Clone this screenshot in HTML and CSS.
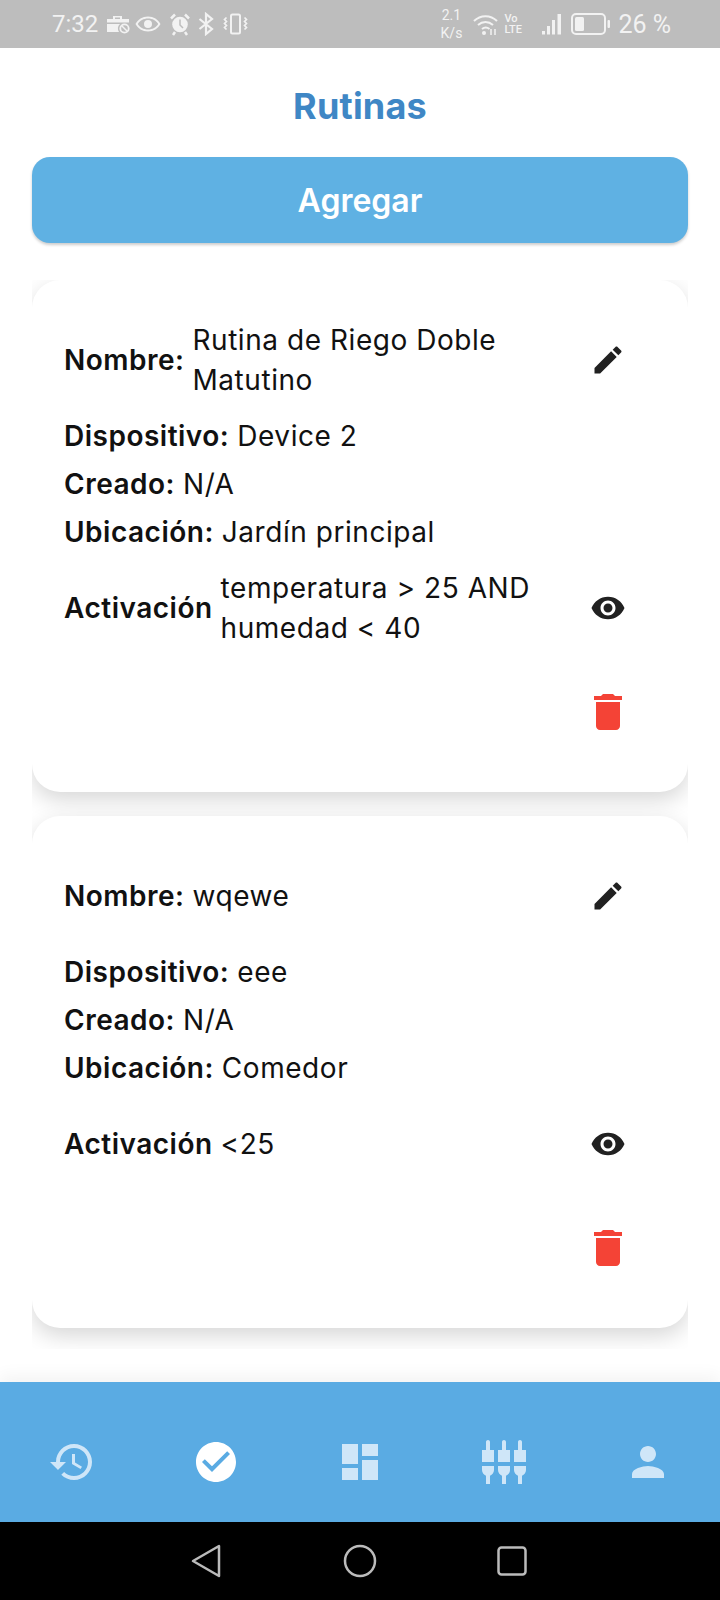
FILE: index.html
```html
<!DOCTYPE html>
<html lang="es">
<head>
  <meta charset="UTF-8" />
  <title>Rutinas</title>
  <link rel="stylesheet" href="styles.css">
</head>
<body>
  <div class="status-bar">
    <span class="time">7:32</span>
    <svg class="st-work" width="24" height="24" viewBox="0 0 24 24"><path d="M1 7h6V4h9v3h7v3.500H1zM9 5.500V7h5V5.500z" fill="#f2f2f2" fill-rule="evenodd"/><path d="M1 12h13a6.500 6.500 0 0 0-1 8H1z" fill="#f2f2f2"/><circle cx="18.500" cy="16.500" r="4.200" fill="none" stroke="#f2f2f2" stroke-width="1.800"/><path d="M15.500 13.500l6 6" stroke="#f2f2f2" stroke-width="1.500"/></svg>
    <svg class="st-eye" width="26" height="24" viewBox="0 0 26 24"><path fill="#f2f2f2" fill-rule="evenodd" d="M13 4.500C7.500 4.500 2.800 7.500 0.500 12c2.300 4.500 7 7.500 12.500 7.500s10.200-3 12.500-7.500C23.200 7.500 18.500 4.500 13 4.500zm0 2c4.500 0 8.200 2.200 10.200 5.500-2 3.300-5.700 5.500-10.200 5.500S4.800 15.300 2.800 12C4.800 8.700 8.500 6.500 13 6.500zm0 1.500a4 4 0 1 0 0 8 4 4 0 0 0 0-8z"/></svg>
    <svg class="st-alarm" width="20" height="24" viewBox="0 0 20 24"><circle cx="10" cy="12.500" r="7.800" fill="#f2f2f2"/><path d="M10 7.500v5.500l3 3" stroke="#bdbdbd" stroke-width="1.500" fill="none"/><path d="M1 6.500l4-4M19 6.500l-4-4M5 20l-2 3M15 20l2 3" stroke="#f2f2f2" stroke-width="2.500"/></svg>
    <svg class="st-bt" width="16" height="24" viewBox="0 0 16 24"><path d="M1.500 7l12.500 10-6 5V2l6 5L1.500 17" fill="none" stroke="#f2f2f2" stroke-width="2.200"/></svg>
    <svg width="25" height="24" viewBox="0 0 25 24"><rect x="8" y="2.500" width="9" height="19" rx="1.500" fill="none" stroke="#f2f2f2" stroke-width="2"/><path d="M3.500 5.500l-2 2 2 2-2 2 2 2-2 2 2 2M21.500 5.500l2 2-2 2 2 2-2 2 2 2-2 2" fill="none" stroke="#f2f2f2" stroke-width="1.700"/></svg>
    <span class="spacer"></span>
    <span class="speed">2.1<br>K/s</span>
    <svg class="st-wifi" width="25" height="24" viewBox="0 0 25 24"><path d="M1 9c6.500-6.500 16.500-6.500 23 0M5 13c4.500-4 10.500-4 15 0M9 17c2.500-2 5-2 7.500 0" fill="none" stroke="#f2f2f2" stroke-width="2"/><circle cx="11" cy="21" r="2" fill="#f2f2f2"/><path d="M18 17v6M22 17v6" stroke="#f2f2f2" stroke-width="1.500"/></svg>
    <span class="volte">Vo<br>LTE</span>
    <svg class="st-signal" width="21" height="24" viewBox="0 0 21 24"><path d="M1 19h3v3.500H1zM6 14h3v8.500H6zM11 8h3v14.500h-3zM16.500 2h3.500v20.500h-3.500z" fill="#f2f2f2"/></svg>
    <svg class="st-battery" width="39" height="24" viewBox="0 0 39 24"><rect x="1" y="2" width="33" height="20" rx="4" fill="none" stroke="#f2f2f2" stroke-width="2"/><rect x="4" y="5" width="9" height="14" rx="1.500" fill="#f2f2f2"/><rect x="36.500" y="8" width="2.500" height="8" rx="1" fill="#f2f2f2"/></svg>
    <span class="battery-text">26 %</span>
  </div>

  <h1 class="title">Rutinas</h1>
  <button class="add-btn">Agregar</button>

  <div class="list">
    <div class="card">
      <div class="row row-icon">
        <b>Nombre:</b>
        <span class="value">Rutina de Riego Doble Matutino</span>
        <button class="icon-btn"><svg width="36" height="36" viewBox="0 0 24 24"><path fill="#212121" d="M3 17.250V21h3.750L17.810 9.940l-3.750-3.750L3 17.250zM20.710 7.040c.39-.39.39-1.020 0-1.410l-2.340-2.340c-.39-.39-1.020-.39-1.410 0l-1.830 1.830 3.750 3.750 1.830-1.830z"/></svg></button>
      </div>
      <div class="row first"><b>Dispositivo:</b> <span class="value">Device 2</span></div>
      <div class="row"><b>Creado:</b> <span class="value">N/A</span></div>
      <div class="row"><b>Ubicación:</b> <span class="value">Jardín principal</span></div>
      <div class="row row-icon first">
        <b>Activación</b>
        <span class="value">temperatura &gt; 25 AND humedad &lt; 40</span>
        <button class="icon-btn"><svg width="36" height="36" viewBox="0 0 24 24"><path fill="#212121" d="M12 4.500C7 4.500 2.730 7.610 1 12c1.730 4.390 6 7.500 11 7.500s9.270-3.110 11-7.500c-1.730-4.390-6-7.500-11-7.500zM12 17c-2.760 0-5-2.240-5-5s2.240-5 5-5 5 2.240 5 5-2.240 5-5 5zm0-8c-1.660 0-3 1.340-3 3s1.340 3 3 3 3-1.340 3-3-1.340-3-3-3z"/></svg></button>
      </div>
      <div class="row-delete">
        <button class="icon-btn"><svg width="48" height="48" viewBox="0 0 24 24"><path fill="#f44336" d="M6 19c0 1.100.9 2 2 2h8c1.100 0 2-.9 2-2V7H6v12zM19 4h-3.500l-1-1h-5l-1 1H5v2h14V4z"/></svg></button>
      </div>
    </div>

    <div class="card">
      <div class="row row-icon">
        <b>Nombre:</b>
        <span class="value">wqewe</span>
        <button class="icon-btn"><svg width="36" height="36" viewBox="0 0 24 24"><path fill="#212121" d="M3 17.250V21h3.750L17.810 9.940l-3.750-3.750L3 17.250zM20.710 7.040c.39-.39.39-1.020 0-1.410l-2.340-2.340c-.39-.39-1.020-.39-1.410 0l-1.830 1.830 3.750 3.750 1.830-1.830z"/></svg></button>
      </div>
      <div class="row first"><b>Dispositivo:</b> <span class="value">eee</span></div>
      <div class="row"><b>Creado:</b> <span class="value">N/A</span></div>
      <div class="row"><b>Ubicación:</b> <span class="value">Comedor</span></div>
      <div class="row row-icon first">
        <b>Activación</b>
        <span class="value">&lt;25</span>
        <button class="icon-btn"><svg width="36" height="36" viewBox="0 0 24 24"><path fill="#212121" d="M12 4.500C7 4.500 2.730 7.610 1 12c1.730 4.390 6 7.500 11 7.500s9.270-3.110 11-7.500c-1.730-4.390-6-7.500-11-7.500zM12 17c-2.760 0-5-2.240-5-5s2.240-5 5-5 5 2.240 5 5-2.240 5-5 5zm0-8c-1.660 0-3 1.340-3 3s1.340 3 3 3 3-1.340 3-3-1.340-3-3-3z"/></svg></button>
      </div>
      <div class="row-delete">
        <button class="icon-btn"><svg width="48" height="48" viewBox="0 0 24 24"><path fill="#f44336" d="M6 19c0 1.100.9 2 2 2h8c1.100 0 2-.9 2-2V7H6v12zM19 4h-3.500l-1-1h-5l-1 1H5v2h14V4z"/></svg></button>
      </div>
    </div>
  </div>

  <nav class="bottom-nav">
    <a class="nav-item"><svg width="48" height="48" viewBox="0 0 24 24"><path d="M13 3c-4.970 0-9 4.030-9 9H1l3.890 3.890.07.14L9 12H6c0-3.870 3.130-7 7-7s7 3.130 7 7-3.130 7-7 7c-1.930 0-3.680-.79-4.940-2.060l-1.420 1.420C8.270 19.990 10.510 21 13 21c4.970 0 9-4.030 9-9s-4.030-9-9-9zm-1 5v5l4.280 2.540.72-1.210-3.500-2.080V8H12z"/></svg></a>
    <a class="nav-item active"><svg width="48" height="48" viewBox="0 0 24 24"><path d="M12 2C6.480 2 2 6.480 2 12s4.480 10 10 10 10-4.480 10-10S17.520 2 12 2zm-2 15l-5-5 1.410-1.410L10 14.170l7.590-7.590L19 8l-9 9z"/></svg></a>
    <a class="nav-item"><svg width="48" height="48" viewBox="0 0 24 24"><path d="M3 13h8V3H3v10zm0 8h8v-6H3v6zm10 0h8V11h-8v10zm0-18v6h8V3h-8z"/></svg></a>
    <a class="nav-item"><svg width="48" height="48" viewBox="0 0 24 24"><path d="M5 2c0-.55-.45-1-1-1s-1 .45-1 1v4H1v6h6V6H5V2zm4 14c0 1.300.84 2.400 2 2.820V23h2v-4.180c1.160-.41 2-1.510 2-2.820v-2H9v2zm-8 0c0 1.300.84 2.400 2 2.820V23h2v-4.180C6.160 18.400 7 17.300 7 16v-2H1v2zM21 6V2c0-.55-.45-1-1-1s-1 .45-1 1v4h-2v6h6V6h-2zm-8-4c0-.55-.45-1-1-1s-1 .45-1 1v4H9v6h6V6h-2V2zm4 14c0 1.300.84 2.400 2 2.820V23h2v-4.180c1.160-.41 2-1.510 2-2.820v-2h-6v2z"/></svg></a>
    <a class="nav-item"><svg width="48" height="48" viewBox="0 0 24 24"><path d="M12 12c2.210 0 4-1.790 4-4s-1.790-4-4-4-4 1.790-4 4 1.790 4 4 4zm0 2c-2.670 0-8 1.340-8 4v2h16v-2c0-2.660-5.330-4-8-4z"/></svg></a>
  </nav>

  <div class="system-nav">
    <svg width="32" height="36" viewBox="0 0 32 36"><path d="M29 3v30L3 18z" fill="none" stroke="#bbb" stroke-width="2.500" stroke-linejoin="round"/></svg>
    <svg width="36" height="36" viewBox="0 0 36 36"><circle cx="18" cy="18" r="15" fill="none" stroke="#bbb" stroke-width="2.500"/></svg>
    <svg class="recents" width="32" height="32" viewBox="0 0 32 32"><rect x="2.500" y="2.500" width="27" height="27" rx="3" fill="none" stroke="#bbb" stroke-width="2.500"/></svg>
  </div>
</body>
</html>
```

FILE: styles.css
```css
body {
  margin: 0;
  width: 720px;
  height: 1600px;
  display: flex;
  flex-direction: column;
  overflow: hidden;
  background: #fff;
  color: #111;
  font-family: Inter, "Noto Sans", sans-serif;
}
.status-bar {
  height: 48px;
  flex: none;
  display: flex;
  align-items: center;
  padding: 0 49px 0 52px;
  background: #bdbdbd;
  color: #f2f2f2;
  font-family: Roboto, sans-serif;
}
.time {
  font-size: 24px;
  margin-right: 8px;
}
.st-work {
  margin-right: 5px;
}
.st-eye {
  margin-right: 9px;
}
.st-alarm {
  margin-right: 8px;
}
.st-bt {
  margin-right: 9px;
}
.spacer {
  flex: 1;
}
.speed {
  font-size: 14px;
  line-height: 18px;
  text-align: center;
  margin-right: 11px;
}
.st-wifi {
  margin-right: 6px;
}
.volte {
  width: 19px;
  font-size: 11px;
  line-height: 11px;
  font-weight: 500;
  margin-right: 18px;
}
.st-signal {
  margin-right: 9px;
}
.st-battery {
  margin-right: 8px;
}
.battery-text {
  font-size: 25px;
}
.title {
  margin: 0;
  height: 109px;
  flex: none;
  display: flex;
  align-items: center;
  justify-content: center;
  padding-top: 6px;
  box-sizing: border-box;
  font-size: 36px;
  font-weight: 700;
  letter-spacing: 0.2px;
  color: #3f87c5;
}
.add-btn {
  flex: none;
  height: 86px;
  margin: 0 32px;
  border: none;
  border-radius: 18px;
  background: #5fb1e3;
  color: #fff;
  font-family: inherit;
  font-size: 32px;
  font-weight: 600;
  box-shadow: 0 2px 3px rgba(0, 0, 0, 0.2);
}
.list {
  flex: 1;
  margin: 37px 32px 33px;
  overflow: hidden;
}
.card {
  background: #fff;
  border-radius: 28px;
  padding: 40px 40px 40px 32px;
  margin-bottom: 24px;
  box-shadow: 0 8px 22px rgba(0, 0, 0, 0.16);
}
.row {
  display: flex;
  align-items: center;
  gap: 8px;
  font-size: 28px;
  line-height: 40px;
  letter-spacing: 0.55px;
  margin-top: 8px;
}
.row-icon {
  min-height: 80px;
  margin-top: 0;
}
.row.first {
  margin-top: 16px;
}
.row b {
  flex: none;
  font-weight: 600;
  letter-spacing: 0.5px;
}
.row-icon .value {
  flex: 1;
}
.icon-btn {
  flex: none;
  width: 80px;
  height: 80px;
  display: flex;
  align-items: center;
  justify-content: center;
  padding: 0;
  border: none;
  background: none;
}
.row-delete {
  display: flex;
  justify-content: flex-end;
  margin-top: 24px;
}
.bottom-nav {
  flex: none;
  height: 140px;
  box-sizing: border-box;
  padding-top: 20px;
  display: flex;
  background: #5aabe3;
  box-shadow: 0 -6px 16px rgba(0, 0, 0, 0.05);
}
.nav-item {
  flex: 1;
  display: flex;
  align-items: center;
  justify-content: center;
  fill: #cfe6f8;
}
.nav-item.active {
  fill: #fff;
}
.system-nav {
  flex: none;
  height: 78px;
  display: grid;
  grid-template-columns: 32px 36px 32px;
  justify-content: center;
  align-items: center;
  column-gap: 120px;
  background: #000;
}
.recents {
  margin-left: -2px;
}
```
